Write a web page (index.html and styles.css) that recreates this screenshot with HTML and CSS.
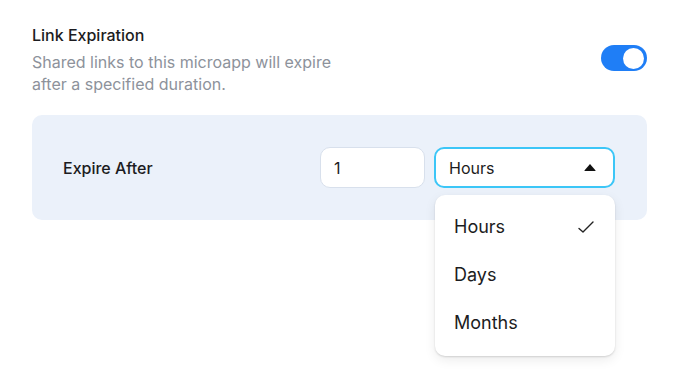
FILE: index.html
```html
<!DOCTYPE html>
<html lang="en">
<head>
    <meta charset="UTF-8">
    <meta name="viewport" content="width=device-width, initial-scale=1.0">
    <title>Link Expiration</title>
    <link rel="stylesheet" href="styles.css">
</head>
<body>

    <!-- Setting header -->
    <div class="setting-head">
        <div class="setting-text">
            <h2>Link Expiration</h2>
            <p>Shared links to this microapp will expire after a specified duration.</p>
        </div>
        <div class="toggle on"><span class="knob"></span></div>
    </div>

    <!-- Expiration panel -->
    <div class="panel">
        <div class="panel-label">Expire After</div>
        <div class="controls">
            <div class="num-input">1</div>
            <div class="select-wrap">
                <div class="select open">
                    <span>Hours</span>
                    <span class="caret"></span>
                </div>
                <ul class="dropdown">
                    <li class="selected">Hours
                        <svg class="check" width="16" height="12" viewBox="0 0 16 12">
                            <path d="M1 7.5 L5 11 L15 1" fill="none" stroke="#222" stroke-width="1.4" stroke-linecap="round" stroke-linejoin="round"/>
                        </svg>
                    </li>
                    <li>Days</li>
                    <li>Months</li>
                </ul>
            </div>
        </div>
    </div>

</body>
</html>
```

FILE: styles.css
```css
html, body {
    min-height: 385px;
}
body {
    margin: 0;
    padding: 25px 41px 0 32px;
    box-sizing: border-box;
    font-family: Inter, "Noto Sans", sans-serif;
    color: #1c1c21;
    background: #fff;
}
.setting-head {
    display: flex;
    justify-content: space-between;
    align-items: flex-start;
}
.setting-text h2 {
    margin: 0;
    font-size: 16px;
    line-height: 20px;
    font-weight: 500;
}
.setting-text p {
    margin: 6px 0 0;
    max-width: 320px;
    font-size: 16px;
    line-height: 22px;
    color: #8d929b;
}
.toggle {
    width: 46px;
    height: 26px;
    border-radius: 13px;
    background: #1f7ef6;
    margin-top: 20px;
    position: relative;
}
.toggle .knob {
    position: absolute;
    top: 2.5px;
    right: 3px;
    width: 21px;
    height: 21px;
    border-radius: 50%;
    background: #fff;
}
.panel {
    margin-top: 20px;
    background: #ebf1fa;
    border-radius: 10px;
    padding: 32px 32px 32px 31px;
    display: flex;
    justify-content: space-between;
    align-items: center;
}
.panel-label {
    font-size: 16px;
    font-weight: 500;
}
.controls {
    display: flex;
    gap: 9px;
}
.num-input, .select {
    height: 41px;
    box-sizing: border-box;
    background: #fff;
    border-radius: 10px;
    display: flex;
    align-items: center;
    font-size: 16px;
}
.num-input {
    width: 105px;
    border: 1.5px solid #d8e0ec;
    padding-left: 13px;
}
.select-wrap {
    position: relative;
}
.select {
    width: 181px;
    border: 2px solid #3cc6f7;
    padding: 0 17px 0 13px;
    justify-content: space-between;
}
.caret {
    width: 0;
    height: 0;
    border-left: 6.5px solid transparent;
    border-right: 6.5px solid transparent;
    border-bottom: 7px solid #111;
    border-radius: 1px;
}
.dropdown {
    position: absolute;
    top: calc(100% + 7px);
    left: 1px;
    right: 0;
    margin: 0;
    padding: 8px 0 9px;
    list-style: none;
    background: #fff;
    border-radius: 10px;
    box-shadow: 0 1px 2px rgba(0, 0, 0, 0.14), 0 4px 12px rgba(0, 0, 0, 0.08);
    z-index: 2;
}
.dropdown li {
    height: 48px;
    line-height: 48px;
    padding: 0 21px 0 19px;
    font-size: 18px;
    display: flex;
    justify-content: space-between;
    align-items: center;
}
```
